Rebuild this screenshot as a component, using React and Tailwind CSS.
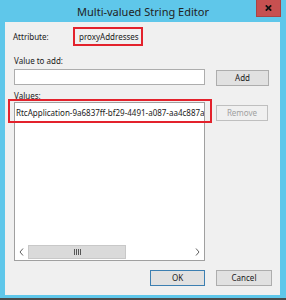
import React from "react";

const font = { fontFamily: '"Noto Sans", "Open Sans", sans-serif' };

function Btn({ children, className = "" }) {
  return (
    <div
      className={
        "flex items-center justify-center h-[16px] border text-[8px] leading-none " +
        className
      }
    >
      {children}
    </div>
  );
}

export default function App() {
  return (
    <div
      className="w-[286px] h-[300px] bg-[#5fc7ea] flex flex-col text-[#1a1a1a] overflow-hidden"
      style={font}
    >
      {/* title bar */}
      <div className="h-[22px] grid grid-cols-[1fr_auto_1fr] items-start">
        <div />
        <div className="text-[11px] leading-none pt-[6px] text-[#222]">
          Multi-valued String Editor
        </div>
        <div className="flex justify-end pr-[5px]">
          <div className="w-[25px] h-[17px] bg-[#c75050] border border-t-0 border-[#a94444] flex items-center justify-center">
            <svg width="7" height="6" viewBox="0 0 7 6">
              <path d="M0.8 0.3 L6.2 5.7 M6.2 0.3 L0.8 5.7" stroke="#111" strokeWidth="1.7" />
            </svg>
          </div>
        </div>
      </div>

      {/* panel */}
      <div className="ml-[5px] mr-[6px] h-[273px] bg-[#f0f0f0] flex flex-col pl-[9px] text-[8px] leading-[11px]">
        {/* attribute */}
        <div className="flex items-center pt-[5px] -ml-[1px]">
          <div className="w-[60px]">Attribute:</div>
          <div className="w-[70px] h-[19px] border-2 border-[#e3222c] flex items-center pl-[4px]">
            proxyAddresses
          </div>
        </div>

        <div className="mt-[9px]">Value to add:</div>
        <div className="flex mt-[3px] items-start">
          <div className="w-[191px] h-[16px] bg-white border border-[#adadad]" />
          <Btn className="ml-[11px] mt-[1px] w-[53px] h-[15px] bg-[#e1e1e1] border-[#adadad]">
            Add
          </Btn>
        </div>

        <div className="mt-[4px]">Values:</div>
        <div className="flex mt-[1px] items-start">
          <div className="relative w-[191px] h-[159px] bg-white border border-[#a0a0a0] flex flex-col">
            <div className="pl-[1px] pt-[4px] whitespace-nowrap overflow-hidden">
              RtcApplication-9a6837ff-bf29-4491-a087-aa4c887a
            </div>
            <div className="flex-1" />
            <div className="h-[14px] mb-[1px] flex items-stretch">
              <div className="w-[13px] flex items-center justify-center">
                <svg width="5" height="8" viewBox="0 0 5 8">
                  <path d="M4 0.5 L1 4 L4 7.5" stroke="#606060" strokeWidth="1" fill="none" />
                </svg>
              </div>
              <div className="w-[98px] bg-[#dadada] border border-[#c8c8c8] flex items-center justify-center gap-[1px]">
                <div className="w-[1px] h-[6px] bg-[#555]" />
                <div className="w-[1px] h-[6px] bg-[#555]" />
                <div className="w-[1px] h-[6px] bg-[#555]" />
                <div className="w-[1px] h-[6px] bg-[#555]" />
              </div>
              <div className="flex-1" />
              <div className="w-[13px] flex items-center justify-center">
                <svg width="5" height="8" viewBox="0 0 5 8">
                  <path d="M1 0.5 L4 4 L1 7.5" stroke="#606060" strokeWidth="1" fill="none" />
                </svg>
              </div>
            </div>
            {/* red annotation */}
            <div className="absolute left-[-7px] top-[-4px] w-[204px] h-[24px] border-2 border-[#e3222c]" />
          </div>
          <Btn className="ml-[11px] mt-[3px] w-[52px] h-[16px] bg-[#f0f0f0] border-[#bfbfbf] text-[#a0a0a0]">
            Remove
          </Btn>
        </div>

        <div className="flex mt-[9px] pl-[136px]">
          <Btn className="w-[55px] h-[16px] bg-[#e1e1e1] border-[#3c7fb1]">OK</Btn>
          <Btn className="ml-[11px] w-[56px] h-[16px] bg-[#e1e1e1] border-[#adadad]">
            Cancel
          </Btn>
        </div>
      </div>
      <div className="h-[3px]" />
      <div className="flex-1 bg-[#4a4a4a]" />
    </div>
  );
}
